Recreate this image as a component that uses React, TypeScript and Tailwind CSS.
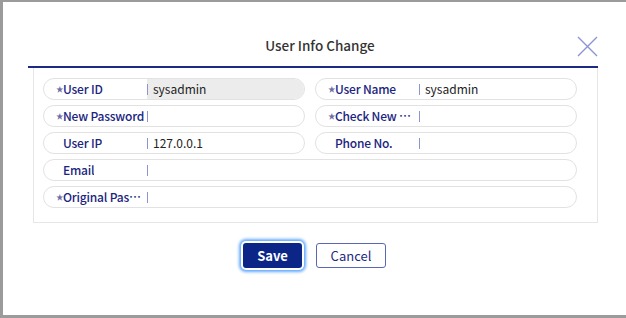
import React from "react";

const font = { fontFamily: '"Noto Sans CJK KR", "Noto Sans", sans-serif' };

type FieldProps = {
  label: string;
  value?: string;
  required?: boolean;
  readOnly?: boolean;
};

const Field = ({ label, value = "", required = false, readOnly = false }: FieldProps) => (
  <div className="h-[22px] flex items-center border border-[#e2e2e2] rounded-full overflow-hidden bg-white">
    <div className="w-[103px] shrink-0 flex items-center pl-[12px] pr-[1px] h-full">
      <span className="w-[7px] shrink-0 text-[7.5px] leading-none text-[#6a6fa6]">{required ? "★" : ""}</span>
      <span className="text-[12px] font-medium text-[#1a2580] whitespace-nowrap overflow-hidden text-ellipsis leading-[16px] tracking-[-0.2px]">
        {label}
      </span>
    </div>
    <div className={`flex-1 h-full flex items-center ${readOnly ? "bg-[#ececec]" : ""}`}>
      <span className="w-px h-[11px] bg-[#8c95d2] shrink-0" />
      <span className="pl-[5px] text-[12px] text-[#222] leading-[16px]">{value}</span>
    </div>
  </div>
);

export default function App() {
  return (
    <div className="w-full h-[318px] bg-[#9b9b9b] pl-[3px] pt-[2px] pb-[3px] flex" style={font}>
      <div className="flex-1 bg-white flex flex-col">
        {/* header */}
        <div className="relative h-[64px] flex items-end justify-center pb-[8px]">
          <h2 className="text-[13.5px] font-medium text-[#333] leading-none mb-[6px] ml-[11px]">User Info Change</h2>
          <button className="absolute right-[28px] top-[34px] w-[21px] h-[21px]">
            <svg viewBox="0 0 21 21" width="21" height="21" fill="none" stroke="#8a94d8" strokeWidth="1.4">
              <path d="M1 1 L20 20 M20 1 L1 20" />
            </svg>
          </button>
        </div>

        <div className="ml-[25px] mr-[28px] border-t-2 border-[#1b2a82]">
          <div className="ml-[5px] border-l border-r border-b border-[#e6e6e6] pt-[10px] pb-[14px] pl-[9px] pr-[20px]">
            <div className="grid grid-cols-2 gap-x-[10px] gap-y-[5px]">
              <Field label="User ID" value="sysadmin" required readOnly />
              <Field label="User Name" value="sysadmin" required />
              <Field label="New Password" required />
              <Field label="Check New Password" required />
              <Field label="User IP" value="127.0.0.1" />
              <Field label="Phone No." />
              <div className="col-span-2">
                <Field label="Email" />
              </div>
              <div className="col-span-2">
                <Field label="Original Password" required />
              </div>
            </div>
          </div>
        </div>

        <div className="flex justify-center gap-[14px] mt-[20px]">
          <button className="w-[59px] h-[25px] bg-[#0c2688] text-white text-[13px] font-bold rounded-[3px] shadow-[0_0_0_2px_#ffffff,0_0_3px_4px_#63aaff]">
            Save
          </button>
          <button className="w-[70px] h-[25px] bg-white text-[#1d2a80] text-[13px] border-[1.5px] border-[#5a66b6] rounded-[3px]">
            Cancel
          </button>
        </div>
      </div>
    </div>
  );
}
